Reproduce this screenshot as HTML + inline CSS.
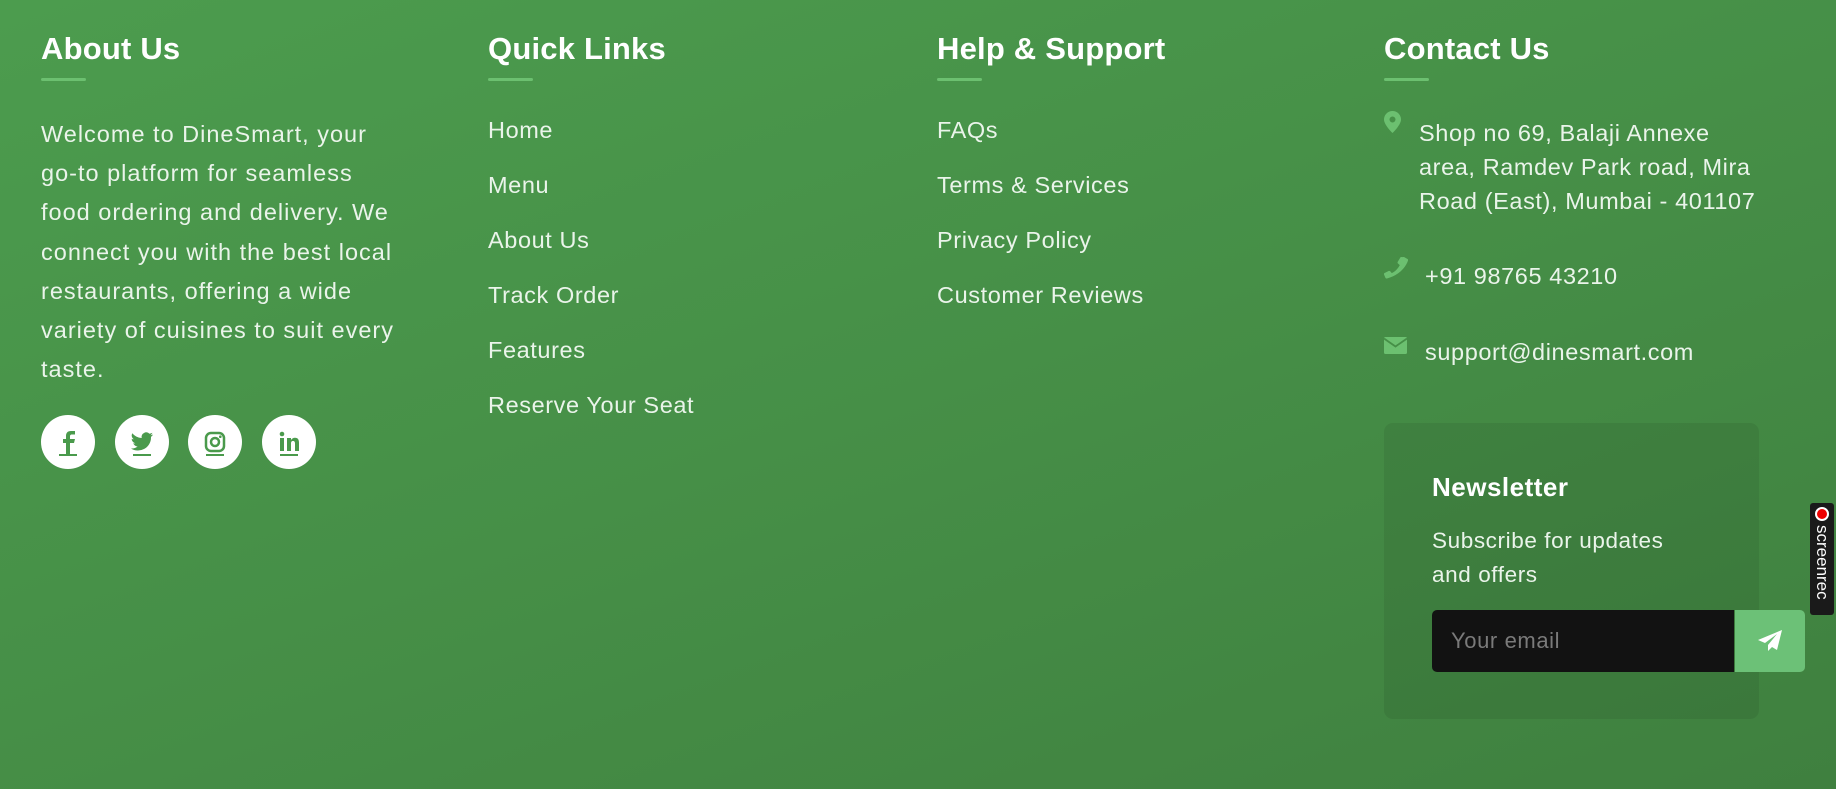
<!DOCTYPE html>
<html><head><meta charset="utf-8"><style>
*{margin:0;padding:0;box-sizing:border-box}
html,body{width:1836px;height:789px;overflow:hidden}
body{background:linear-gradient(160deg,#4c9c4e 0%,#468f47 50%,#3f803f 100%);font-family:"Liberation Sans",sans-serif;color:#eaf4ea;position:relative}
.h{position:absolute;top:31px;font-size:31px;font-weight:bold;color:#fff;letter-spacing:0.2px}
.ul{position:absolute;top:78px;width:45px;height:3px;background:#6cc070;border-radius:2px}
.t{position:absolute;font-size:23.5px;white-space:nowrap;letter-spacing:0.6px}
.c{position:absolute;top:415px;width:54px;height:54px;border-radius:50%;background:#fff;display:flex;align-items:center;justify-content:center}
.c::after{content:"";position:absolute;left:18px;right:18px;bottom:13px;height:2px;background:#4a9a4c}
</style></head><body>
<div class="h" style="left:41px">About Us</div><div class="ul" style="left:41px"></div>
<div class="h" style="left:488px">Quick Links</div><div class="ul" style="left:488px"></div>
<div class="h" style="left:937px">Help &amp; Support</div><div class="ul" style="left:937px"></div>
<div class="h" style="left:1384px">Contact Us</div><div class="ul" style="left:1384px"></div>

<div class="t" style="left:41px;top:115px;line-height:39.2px;white-space:normal;width:420px;letter-spacing:1px">Welcome to DineSmart, your<br>go-to platform for seamless<br>food ordering and delivery. We<br>connect you with the best local<br>restaurants, offering a wide<br>variety of cuisines to suit every<br>taste.</div>

<div class="c" style="left:41px"><svg width="22" height="24" viewBox="0 0 22 24"><path d="M13 24V13h4l1-4h-5V6.5c0-1.2.4-2 2-2h3V1h-4c-3.5 0-5 2-5 5v3H6v4h3v11z" fill="#4a9a4c"/></svg></div>
<div class="c" style="left:115px"><svg width="24" height="22" viewBox="0 0 24 20"><path d="M23 2.5c-.8.4-1.7.6-2.6.7.9-.6 1.6-1.4 2-2.5-.9.5-1.900.9-2.9 1.1A4.6 4.6 0 0 0 11.7 6 13 13 0 0 1 2.3 1.2a4.6 4.6 0 0 0 1.4 6.1c-.7 0-1.4-.2-2-.6 0 2.2 1.6 4.1 3.7 4.5-.7.2-1.4.2-2.1.1.6 1.8 2.3 3.2 4.3 3.2A9.3 9.3 0 0 1 1 16.5 13 13 0 0 0 21 5.5v-.6c.8-.6 1.5-1.4 2-2.4z" fill="#4a9a4c"/></svg></div>
<div class="c" style="left:188px"><svg width="22" height="22" viewBox="0 0 22 22"><rect x="2" y="2" width="18" height="18" rx="5" fill="none" stroke="#4a9a4c" stroke-width="2.5"/><circle cx="11" cy="11" r="4" fill="none" stroke="#4a9a4c" stroke-width="2.5"/><circle cx="16.3" cy="5.7" r="1.3" fill="#4a9a4c"/></svg></div>
<div class="c" style="left:262px"><svg width="22" height="22" viewBox="0 0 22 22"><rect x="2" y="7" width="4" height="13" fill="#4a9a4c"/><circle cx="4" cy="3" r="2.3" fill="#4a9a4c"/><path d="M9 7h4v2c.8-1.4 2.3-2.3 4-2.3 3 0 4 2 4 5V20h-4v-7.5c0-1.5-.5-2.5-2-2.5s-2 1-2 2.5V20H9z" fill="#4a9a4c"/></svg></div>

<div class="t" style="left:488px;top:117px">Home</div>
<div class="t" style="left:488px;top:172px">Menu</div>
<div class="t" style="left:488px;top:227px">About Us</div>
<div class="t" style="left:488px;top:282px">Track Order</div>
<div class="t" style="left:488px;top:337px">Features</div>
<div class="t" style="left:488px;top:392px">Reserve Your Seat</div>

<div class="t" style="left:937px;top:117px">FAQs</div>
<div class="t" style="left:937px;top:172px">Terms &amp; Services</div>
<div class="t" style="left:937px;top:227px">Privacy Policy</div>
<div class="t" style="left:937px;top:282px">Customer Reviews</div>

<svg style="position:absolute;left:1384px;top:111px" width="17" height="22" viewBox="0 0 17 22"><path d="M8.5 0A8.5 8.5 0 0 0 0 8.5C0 14 8.5 22 8.5 22S17 14 17 8.5A8.5 8.5 0 0 0 8.5 0zm0 11.5a3 3 0 1 1 0-6 3 3 0 0 1 0 6z" fill="#6cc070"/></svg>
<div class="t" style="left:1419px;top:116px;line-height:34px">Shop no 69, Balaji Annexe<br>area, Ramdev Park road, Mira<br>Road (East), Mumbai - 401107</div>
<svg style="position:absolute;left:1384px;top:257px" width="24" height="22" viewBox="0 0 24 22"><path d="M20 0l3.5 2c.6.4.8 1 .5 1.6C21 12 13 19 3 21.5c-.7.2-1.3-.1-1.6-.7L0 17.5c-.2-.6 0-1.2.6-1.5l4-2c.5-.3 1.2-.2 1.6.3l1.6 1.8c3.4-1.700 6.2-4.5 8-8l-1.8-1.6c-.5-.4-.6-1-.3-1.6L16.2.7C16.5.1 17.2-.1 17.8.1z" fill="#6cc070"/></svg>
<div class="t" style="left:1425px;top:263px">+91 98765 43210</div>
<svg style="position:absolute;left:1384px;top:337px" width="23" height="17" viewBox="0 0 23 17"><rect width="23" height="17" rx="1.5" fill="#6cc070"/><path d="M0 1.5l11.5 8L23 1.5" fill="none" stroke="#468f47" stroke-width="1.8"/></svg>
<div class="t" style="left:1425px;top:339px">support@dinesmart.com</div>

<div style="position:absolute;left:1384px;top:423px;width:375px;height:296px;border-radius:9px;background:rgba(0,0,0,0.07)"></div>
<div style="position:absolute;left:1432px;top:472px;font-size:26px;font-weight:bold;color:#fff;letter-spacing:0.5px">Newsletter</div>
<div class="t" style="left:1432px;top:524px;line-height:34px;font-size:22.5px">Subscribe for updates<br>and offers</div>
<div style="position:absolute;left:1432px;top:610px;width:302px;height:62px;background:#121212;border-radius:5px 0 0 5px;font-size:22px;color:#7a7a7a;padding:18px 0 0 19px;letter-spacing:0.6px">Your email</div>
<div style="position:absolute;left:1735px;top:610px;width:70px;height:62px;background:#6cc177;border-radius:0 5px 5px 0;display:flex;align-items:center;justify-content:center"><svg width="24" height="22" viewBox="0 0 24 22"><path d="M24 0L0 10l7 3 12-9-9 11v6l4-4 5 3z" fill="#fff"/></svg></div>

<div style="position:absolute;left:1810px;top:503px;width:24px;height:112px;background:#1a1a1a;border-radius:3px"><div style="position:absolute;left:5px;top:4px;width:14px;height:14px;border-radius:50%;background:#e00;border:2px solid #fff"></div><div style="position:absolute;left:2px;top:22px;color:#fff;font-size:17px;writing-mode:vertical-rl;">screenrec</div></div>
</body></html>
